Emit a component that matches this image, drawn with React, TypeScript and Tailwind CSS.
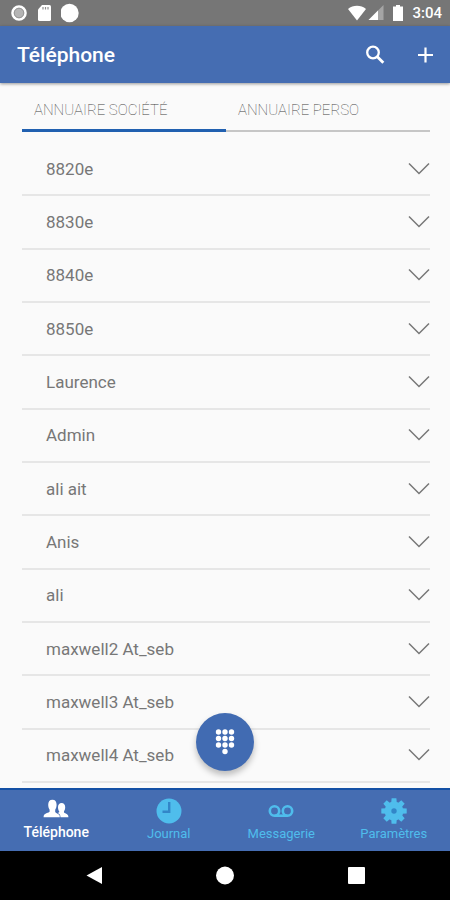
const contacts = [
  "8820e",
  "8830e",
  "8840e",
  "8850e",
  "Laurence",
  "Admin",
  "ali ait",
  "Anis",
  "ali",
  "maxwell2 At_seb",
  "maxwell3 At_seb",
  "maxwell4 At_seb",
];

function PeopleIcon() {
  return (
    <svg width="26" height="24" viewBox="0 0 26 24" fill="currentColor">
      <path d="M9.400 1.800c2.800 0 4.200 2 4.200 4.900 0 2.300-.7 4-1.400 5v2.200c.5 1.200 3.300 1.500 4.200 3.200.3.700.4 1.400.4 2.200H.6c0-.8.100-1.500.4-2.200.9-1.900 4.900-2.400 5.600-3.400v-2c-.7-1-1.400-2.700-1.400-5 0-2.900 1.400-4.900 4.200-4.900z" />
      <path d="M18.600 5c2.300 0 3.600 1.700 3.600 4.200 0 1.900-.6 3.200-1.200 4v1.300c.5 1 3.100 1.100 4 2.700.3.600.4 1.300.4 2.100h-7.900c0-2.400-.9-3.500-2.700-4.300l1.400-.7v-1c-.6-.8-1.200-2.200-1.200-4.100 0-2.500 1.300-4.200 3.600-4.200z" />
    </svg>
  );
}

function ClockIcon() {
  return (
    <svg width="26" height="26" viewBox="0 0 26 26">
      <circle cx="13" cy="13" r="12.500" fill="currentColor" />
      <path d="M13.200 4v9.700H6.500" fill="none" stroke="#3286c8" strokeWidth="2.400" />
    </svg>
  );
}

function VoicemailIcon() {
  return (
    <svg width="26" height="26" viewBox="0 0 26 26" fill="none" stroke="currentColor" strokeWidth="2.600">
      <circle cx="6.500" cy="13" r="4.700" />
      <circle cx="19.500" cy="13" r="4.700" />
      <path d="M6.500 17.700h13" />
    </svg>
  );
}

function GearIcon() {
  const teeth = [0, 45, 90, 135, 180, 225, 270, 315];
  return (
    <svg width="26" height="26" viewBox="0 0 26 26" fill="currentColor">
      {teeth.map((angle) => (
        <path key={angle} d="M10.200 5 10.600.3h4.800L15.800 5z" transform={`rotate(${angle} 13 13)`} />
      ))}
      <circle cx="13" cy="13" r="9.400" />
      <circle cx="13" cy="13" r="2.700" fill="#3286c8" />
    </svg>
  );
}

const navItems = [
  { label: "Téléphone", icon: PeopleIcon, active: true },
  { label: "Journal", icon: ClockIcon, active: false },
  { label: "Messagerie", icon: VoicemailIcon, active: false },
  { label: "Paramètres", icon: GearIcon, active: false },
];

function StatusBar() {
  return (
    <div className="flex h-[26px] items-center justify-between bg-[#767676] pl-[11px] pr-2 text-white">
      <div className="flex items-center gap-2">
        <svg width="16" height="16" viewBox="0 0 16 16">
          <circle cx="8" cy="8" r="6.500" fill="#b4b4b4" stroke="#fff" strokeWidth="2.600" />
          <circle cx="8" cy="8" r="4.800" fill="none" stroke="#949494" strokeWidth="1" />
        </svg>
        <svg width="18" height="16" viewBox="0 0 18 16">
          <path d="M7 0h7.500A1.500 1.500 0 0 1 16 1.500v13a1.500 1.500 0 0 1-1.500 1.500h-10A1.500 1.500 0 0 1 3 14.500V4.500z" fill="#fff" />
          <path d="M8 2v2.500M10.500 2v2.500M13 2v2.500" stroke="#909090" strokeWidth="1.200" />
        </svg>
        <svg width="20" height="20" viewBox="0 0 20 20">
          <circle cx="8.500" cy="10" r="9.200" fill="#fff" />
        </svg>
      </div>
      <div className="flex items-center">
        <svg width="20" height="16" viewBox="0 0 20 16">
          <path d="M1 4C6-.2 14-.2 19 4L10 15.500z" fill="#fff" />
        </svg>
        <svg className="ml-px" width="16" height="16" viewBox="0 0 16 16">
          <path d="M15.500 0v15H.5z" fill="#a5a5a5" />
          <path d="M10 5.500V15H.5z" fill="#fff" />
        </svg>
        <svg className="ml-2" width="12" height="16" viewBox="0 0 12 16">
          <path d="M4 0h4v1.500h3V16H1V1.500h3z" fill="#fff" />
        </svg>
        <span className="ml-2 text-[15px] font-medium leading-5">3:04</span>
      </div>
    </div>
  );
}

function AppBar() {
  return (
    <header className="relative flex h-[57px] items-center justify-between bg-[#456db2] pl-[17px] pr-[15px] text-white shadow-[0_1px_3px_rgba(0,0,0,0.4)]">
      <h1 className="pt-px text-[21px] font-medium leading-7">Téléphone</h1>
      <div className="flex items-center gap-7">
        <button type="button" aria-label="Rechercher">
          <svg width="24" height="24" viewBox="0 0 24 24" fill="none" stroke="currentColor">
            <circle cx="10" cy="9.500" r="5.800" strokeWidth="2.300" />
            <path d="M14.300 13.800l6 6" strokeWidth="2.800" />
          </svg>
        </button>
        <button type="button" aria-label="Ajouter">
          <svg width="20" height="20" viewBox="0 0 20 20" fill="none" stroke="currentColor" strokeWidth="2.200">
            <path d="M10.500 2.500v15M3 10h15" />
          </svg>
        </button>
      </div>
    </header>
  );
}

function Directory() {
  return (
    <main className="relative flex flex-1 flex-col pb-[5px] pl-[22px] pr-5">
      <div role="tablist" className="flex h-[49px] text-[15px] font-thin text-[#444444]">
        <button
          type="button"
          role="tab"
          aria-selected="true"
          className="flex-1 border-b-3 border-[#2160b0] pl-3 pt-2 text-left"
        >
          ANNUAIRE SOCIÉTÉ
        </button>
        <button
          type="button"
          role="tab"
          aria-selected="false"
          className="flex-1 border-b-2 border-[#c6c6c6] pl-3 pt-2 text-left"
        >
          ANNUAIRE PERSO
        </button>
      </div>

      <ul className="mt-[11px] flex flex-1 flex-col">
        {contacts.map((name) => (
          <li key={name} className="flex flex-1 border-b-2 border-[#e6e6e6]">
            <button type="button" className="flex flex-1 items-center justify-between pl-6 text-left">
              <span className="text-[17px] leading-6 text-[#777777]">{name}</span>
              <svg width="22" height="14" viewBox="0 0 22 14" fill="none" stroke="#777777" strokeWidth="1.500">
                <path d="M1 1.500l10 10 10-10" />
              </svg>
            </button>
          </li>
        ))}
      </ul>

      {/* Dialpad button */}
      <button
        type="button"
        aria-label="Clavier"
        className="absolute bottom-[17px] left-1/2 flex size-[58px] -translate-x-1/2 items-center justify-center rounded-full bg-[#416bb2] text-white shadow-[0_4px_6px_rgba(0,0,0,0.25)]"
      >
        <svg width="20" height="26" viewBox="0 0 20 26" fill="currentColor">
          {[3, 9.500, 16].map((y) =>
            [3.500, 10, 16.500].map((x) => <circle key={`${x}-${y}`} cx={x} cy={y} r="2.700" />)
          )}
          <circle cx="10" cy="22.500" r="2.700" />
        </svg>
      </button>
    </main>
  );
}

function BottomNav() {
  return (
    <nav className="flex h-[63px] border-t-2 border-[#1350a5] bg-[#456db2]">
      {navItems.map((item) => {
        const Icon = item.icon;
        return (
          <a
            key={item.label}
            href="#"
            className="flex flex-1 flex-col items-center pt-2 text-[#4fbdec] aria-[current=page]:text-white"
            aria-current={item.active ? "page" : undefined}
          >
            <Icon />
            <span className={item.active ? "text-[14px] font-medium leading-5" : "text-[13px] leading-5"}>
              {item.label}
            </span>
          </a>
        );
      })}
    </nav>
  );
}

function SystemBar() {
  return (
    <div className="flex h-[49px] items-center justify-between bg-black px-[84px] text-white">
      <button type="button" aria-label="Retour">
        <svg width="20" height="20" viewBox="0 0 20 20" fill="currentColor">
          <path d="M2.500 9.500 18 1v17z" />
        </svg>
      </button>
      <button type="button" aria-label="Accueil">
        <svg width="20" height="20" viewBox="0 0 20 20" fill="currentColor">
          <circle cx="10" cy="9.500" r="9" />
        </svg>
      </button>
      <button type="button" aria-label="Applications récentes">
        <svg width="20" height="20" viewBox="0 0 20 20" fill="currentColor">
          <rect x="2" y="1" width="17" height="17" rx="1" />
        </svg>
      </button>
    </div>
  );
}

export default function App() {
  return (
    <div className="flex min-h-screen flex-col bg-[#fafafa] font-[Roboto,sans-serif]">
      <StatusBar />
      <AppBar />
      <Directory />
      <BottomNav />
      <SystemBar />
    </div>
  );
}
